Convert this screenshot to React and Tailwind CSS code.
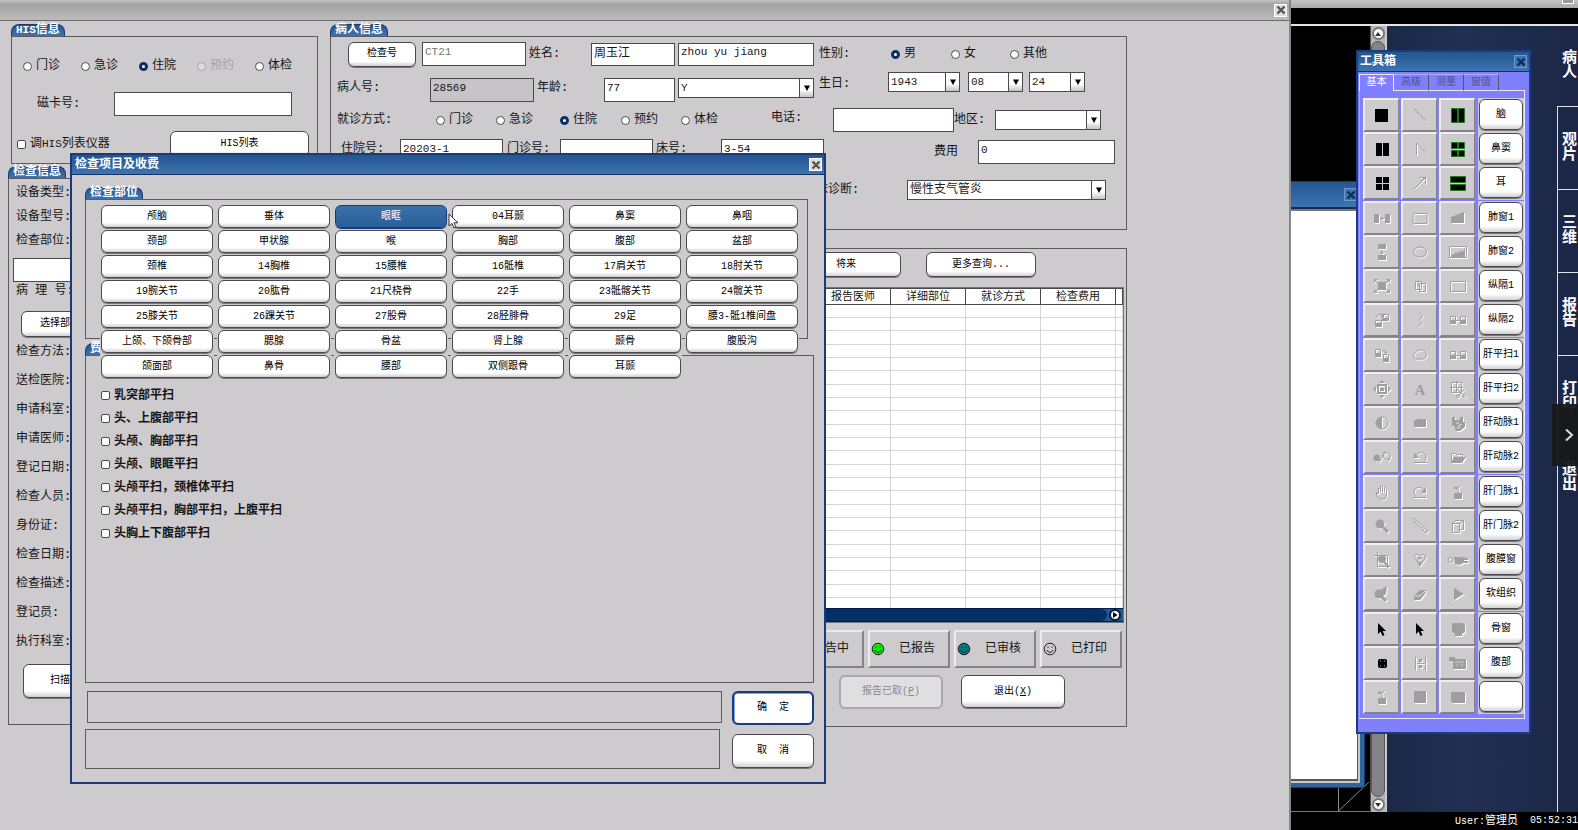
import React from 'react';

/* ---------- shared controls ---------- */

const BTN = 'rounded-md text-[10px] leading-none whitespace-nowrap';

const VARIANTS = {
  plain: 'border border-[#4a4a4c] bg-gradient-to-b from-white from-80% to-[#d0d0d2] text-black shadow-[0_1px_0_#77777a]',
  selected: 'border border-[#1b3a78] bg-gradient-to-b from-[#3a70aa] to-[#2c5f9a] text-white shadow-[0_1px_0_#1b3a78]',
  primary: 'border-2 border-[#1b3a78] bg-white text-black shadow-[inset_0_1px_0_#7fa8dc,inset_1px_0_0_#7fa8dc]',
  disabled: 'border-2 border-[#aaa8ab] bg-[#dfdfe1] text-[#8b898c]',
};

function Btn({ variant = 'plain', className = '', children, ...rest }) {
  return (
    <button type="button" className={`${BTN} ${VARIANTS[variant]} ${className}`} {...rest}>
      {children}
    </button>
  );
}

function Close({ className = 'border-white bg-[#dedede] text-[#555]', label }) {
  return (
    <button type="button" aria-label={label} className={`flex size-[13px] items-center justify-center border ${className}`}>
      <svg viewBox="0 0 10 10" className="size-2.5" stroke="currentColor" strokeWidth="2.4">
        <path d="M1.5 1.5l7 7M8.5 1.5l-7 7" />
      </svg>
    </button>
  );
}

function Radio({ name, label, checked, disabled, className = '' }) {
  return (
    <label className={`flex shrink-0 items-center gap-1 whitespace-nowrap ${disabled ? 'text-[#a5a3a6]' : ''} ${className}`}>
      <input
        type="radio"
        name={name}
        defaultChecked={checked}
        disabled={disabled}
        className="size-[9px] appearance-none rounded-full border border-[#4a4a4c] bg-white checked:border-[3px] checked:border-[#0d2f66] disabled:border-[#a5a3a6] disabled:bg-[#dcdadd]"
      />
      {label}
    </label>
  );
}

function Field({ id, value = '', className = '', ...rest }) {
  return (
    <input
      id={id}
      type="text"
      defaultValue={value}
      className={`shrink-0 border border-[#4a4a4c] px-0.5 pb-1 ${className}`}
      {...rest}
    />
  );
}

function Select({ id, value = '', className = '', label, text = 'text-[11px]' }) {
  return (
    <div className={`relative h-5 shrink-0 ${className}`}>
      <select
        id={id}
        aria-label={label}
        defaultValue={value}
        className={`size-full appearance-none border border-[#4a4a4c] bg-white pr-4 pl-0.5 text-[#222] ${text}`}
      >
        <option>{value}</option>
      </select>
      <span className="pointer-events-none absolute inset-y-px right-px flex w-3.5 items-center justify-center border-l border-[#4a4a4c] bg-gradient-to-b from-white from-60% to-[#c4c4c6]">
        <svg viewBox="0 0 6 6" className="size-1.5">
          <path d="M0 0.5h6L3 6z" />
        </svg>
      </span>
    </div>
  );
}

function Group({ title, className = '', boxClass = '', children }) {
  return (
    <section className={`flex flex-col ${className}`}>
      <h2 className="h-3 w-fit rounded-t-lg border border-b-0 border-[#1c3a72] bg-gradient-to-b from-[#24568f] to-[#3e74b0] px-1 text-xs leading-[11px] font-bold text-white">
        {title}
      </h2>
      <div className={`border border-[#5c5a5d] ${boxClass}`}>{children}</div>
    </section>
  );
}

/* ---------- main registration window ---------- */

function HisGroup() {
  return (
    <Group title={<span><span className="text-[11px]">HIS</span>信息</span>} className="ml-[3px]" boxClass="h-32 pl-[5px] pr-2">
      <div className="mt-[19px] flex h-5 items-center gap-[21px] pl-1.5">
        <Radio name="his" label="门诊" />
        <Radio name="his" label="急诊" />
        <Radio name="his" label="住院" checked />
        <Radio name="his" label="预约" disabled />
        <Radio name="his" label="体检" />
      </div>
      <div className="mt-4 flex items-center">
        <label htmlFor="card" className="w-[97px] pl-5">磁卡号:</label>
        <Field id="card" className="h-6 w-[178px] bg-white text-[11px]" />
      </div>
      <div className="mt-[15px] flex items-center justify-between">
        <label className="flex items-center gap-1">
          <input type="checkbox" className="size-[9px] appearance-none rounded-xs border border-[#4a4a4c] bg-white" />
          <span>调<span className="text-[11px]">HIS</span>列表仪器</span>
        </label>
        <Btn className="h-[26px] w-[139px]">HIS列表</Btn>
      </div>
    </Group>
  );
}

const STUDY_TOP = ['设备类型:', '设备型号:', '检查部位:'];
const STUDY_REST = ['检查方法:', '送检医院:', '申请科室:', '申请医师:', '登记日期:', '检查人员:', '身份证:', '检查日期:', '检查描述:', '登记员:', '执行科室:'];

function StudyGroup() {
  return (
    <Group title="检查信息" className="mt-0.5" boxClass="h-[547px] px-1">
      <div className="mt-0.5 pl-[3px]">
        {STUDY_TOP.map((t) => (
          <div key={t} className="flex h-6 items-center">{t}</div>
        ))}
      </div>
      <Field aria-label="检查部位" className="mt-[5px] block h-6 w-[280px] bg-white text-[11px]" />
      <div className="flex h-[18px] items-center pl-[3px]">病 理 号:</div>
      <Btn className="mt-[11px] ml-2 block h-[26px] w-[78px]">选择部位</Btn>
      <div className="pl-[3px]">
        {STUDY_REST.map((t) => (
          <div key={t} className="flex h-[29px] items-center">{t}</div>
        ))}
      </div>
      <Btn className="mt-2 ml-2.5 block h-[34px] w-[104px]">扫描申请单</Btn>
    </Group>
  );
}

function PatientGroup() {
  return (
    <Group title="病人信息" boxClass="h-[194px] pl-1.5">
      <div className="mt-[3px] flex h-7 items-center">
        <Btn className="mr-1.5 ml-[11px] h-[25px] w-[68px]">检查号</Btn>
        <Field aria-label="检查号" value="CT21" className="h-6 w-[104px] bg-white text-[11px] text-[#777]" />
        <label htmlFor="name" className="w-[65px] pl-[3px]">姓名:</label>
        <Field id="name" value="周玉江" className="mr-[3px] h-[23px] w-[84px] bg-white text-xs" />
        <Field aria-label="拼音" value="zhou yu jiang" className="h-[23px] w-[136px] bg-white text-[11px]" />
        <span className="w-[77px] pl-[5px]">性别:</span>
        <Radio name="sex" label="男" checked className="w-[60px]" />
        <Radio name="sex" label="女" className="w-[59px]" />
        <Radio name="sex" label="其他" />
      </div>
      <div className="mt-1 flex h-[30px] items-end">
        <label htmlFor="pid" className="w-[93px] pb-1.5">病人号:</label>
        <Field id="pid" value="28569" disabled className="h-6 w-[104px] bg-[#c6c4c7] text-[11px]" />
        <label htmlFor="age" className="w-[70px] pb-1.5 pl-[3px]">年龄:</label>
        <Field id="age" value="77" className="mr-[3px] h-6 w-[71px] bg-white text-[11px]" />
        <Select label="年龄单位" value="Y" className="mb-1 w-[136px]" />
        <div className="flex self-start">
          <span className="w-[74px] pt-1 pl-[5px]">生日:</span>
          <Select label="年" value="1943" className="mr-2 w-[72px]" />
          <Select label="月" value="08" className="mr-1.5 w-[55px]" />
          <Select label="日" value="24" className="w-[56px]" />
        </div>
      </div>
      <div className="mt-1 flex h-7 items-center">
        <span className="w-[99px]">就诊方式:</span>
        <Radio name="visit" label="门诊" className="w-[60px]" />
        <Radio name="visit" label="急诊" className="w-[64px]" />
        <Radio name="visit" label="住院" checked className="w-[61px]" />
        <Radio name="visit" label="预约" className="w-[60px]" />
        <Radio name="visit" label="体检" className="w-[90px]" />
        <label htmlFor="tel" className="w-[62px] pb-1">电话:</label>
        <Field id="tel" className="h-6 w-[121px] bg-white text-[11px]" />
        <label htmlFor="area" className="w-[41px]">地区:</label>
        <Select id="area" className="w-[106px]" />
      </div>
      <div className="mt-[5px] flex h-[25px] items-end">
        <div className="flex items-center self-start">
          <label htmlFor="inp" className="w-[63px] pb-1 pl-1">住院号:</label>
          <Field id="inp" value="20203-1" className="h-6 w-[103px] bg-white text-[11px]" />
          <label htmlFor="outp" className="w-[57px] pb-1 pl-1">门诊号:</label>
          <Field id="outp" className="h-6 w-[93px] bg-white text-[11px]" />
          <label htmlFor="bed" className="w-[68px] pb-1 pl-[3px]">床号:</label>
          <Field id="bed" value="3-54" className="h-6 w-[103px] bg-white text-[11px]" />
        </div>
        <label htmlFor="fee" className="w-[154px] pb-1 pl-[110px]">费用</label>
        <Field id="fee" value="0" className="h-6 w-[137px] bg-white text-[11px]" />
      </div>
      <div className="mt-4 flex items-center">
        <label htmlFor="diag" className="w-[570px] pl-[467px]">临床诊断:</label>
        <Select id="diag" value="慢性支气管炎" text="text-xs" className="w-[199px]" />
      </div>
    </Group>
  );
}

const COLUMNS = [
  ['检查号', 'w-[106px]'],
  ['姓名', 'w-[75px]'],
  ['年龄', 'w-[75px]'],
  ['检查日期', 'w-[75px]'],
  ['登记员', 'w-[75px]'],
  ['报告状态', 'w-[75px]'],
  ['报告医师', 'w-[75px]'],
  ['详细部位', 'w-[75px]'],
  ['就诊方式', 'w-[75px]'],
  ['检查费用', 'w-[75px]'],
  ['', ''],
];

function Smiley({ className }) {
  return (
    <svg viewBox="0 0 14 14" className={`size-3.5 ${className}`} stroke="#222" strokeWidth="1">
      <circle cx="7" cy="7" r="5.8" />
      <path d="M5 4.4v1.4M9 4.4v1.4" fill="none" />
      <path d="M3.8 8c1 3 5.4 3 6.4 0" fill="none" />
    </svg>
  );
}

const STATUS = [
  ['报告中', 'fill-[#e8e800]'],
  ['已报告', 'fill-[#00f000]'],
  ['已审核', 'fill-[#007c80]'],
  ['已打印', 'fill-[#cdcbce]'],
];

function ListGroup() {
  return (
    <section className="mt-[18px] flex h-[479px] flex-col border border-[#5c5a5d] px-0.5">
      <div className="mt-[3px] flex justify-end gap-[25px] pr-[88px]">
        <Btn className="h-[25px] w-[110px]">将来</Btn>
        <Btn className="h-[25px] w-[110px]">更多查询...</Btn>
      </div>
      <div className="mt-2.5 h-[336px] border border-[#77777a] bg-white">
        <div className="h-80 overflow-hidden bg-white">
          <table className="w-full table-fixed border-collapse">
            <thead>
              <tr className="h-4">
                {COLUMNS.map(([c, w], i) => (
                  <th key={i} className={`border border-[#4a4a4c] bg-white p-0 text-[11px] leading-[14px] font-normal ${w}`}>{c}</th>
                ))}
              </tr>
            </thead>
            <tbody>
              {Array.from({ length: 24 }, (_, r) => (
                <tr key={r} className={r % 3 === 2 ? 'h-[14px]' : 'h-[13px]'}>
                  {COLUMNS.map((_, i) => (
                    <td key={i} className="border border-[#d6d6d8] p-0" />
                  ))}
                </tr>
              ))}
            </tbody>
          </table>
        </div>
        <div className="flex h-3.5 items-center justify-end border-y border-[#001c48] bg-[#24568f]">
          <span className="h-3 flex-1 rounded-r-full bg-[#003068]" />
          <button type="button" aria-label="向右滚动" className="mx-0.5 flex size-3 items-center justify-center rounded-full border-2 border-[#001c48] bg-white">
            <svg viewBox="0 0 6 6" className="size-1.5"><path d="M1 0v6l4.5-3z" /></svg>
          </button>
        </div>
      </div>
      <div className="mt-[7px] flex justify-end gap-1 pr-0.5">
        {STATUS.map(([t, c]) => (
          <div key={t} className="flex h-[38px] w-[82px] items-center border-2 border-t-[#eceaed] border-r-[#858387] border-b-[#858387] border-l-[#eceaed]">
            <Smiley className={`ml-px ${c}`} />
            <span className="ml-3.5">{t}</span>
          </div>
        ))}
      </div>
      <div className="mt-[7px] flex justify-end gap-[18px] pr-[59px]">
        <Btn variant="disabled" disabled className="h-[34px] w-[104px]">
          报告已取(<u>P</u>)
        </Btn>
        <Btn className="h-[33px] w-[104px]">退出(<u>X</u>)</Btn>
      </div>
    </section>
  );
}

function MainWindow() {
  return (
    <div className="absolute inset-y-0 left-0 flex w-[1291px] flex-col overflow-hidden border-r-2 border-[#858585] bg-[#cdcbce]">
      <header className="flex h-[21px] shrink-0 items-center justify-end border-b border-[#6c6c6c] bg-gradient-to-b from-[#c4c4c4] via-[#a3a3a3] via-20% to-[#bcbcbc] pr-0.5">
        <Close label="关闭" />
      </header>
      <main className="flex flex-1 gap-3 pt-[3px] pl-2">
        <div className="w-[310px] shrink-0">
          <HisGroup />
          <StudyGroup />
        </div>
        <div className="w-[797px] shrink-0">
          <PatientGroup />
          <ListGroup />
        </div>
      </main>
    </div>
  );
}

/* ---------- exam item dialog ---------- */

const PARTS = [
  '颅脑', '垂体', '眼眶', '04耳颞', '鼻窦', '鼻咽',
  '颈部', '甲状腺', '喉', '胸部', '腹部', '盆部',
  '颈椎', '14胸椎', '15腰椎', '16骶椎', '17肩关节', '18肘关节',
  '19腕关节', '20肱骨', '21尺桡骨', '22手', '23骶髂关节', '24髋关节',
  '25膝关节', '26踝关节', '27股骨', '28胫腓骨', '29足', '腰3-骶1椎间盘',
  '上颌、下颌骨部', '腮腺', '骨盆', '肾上腺', '颞骨', '腹股沟',
  '颌面部', '鼻骨', '腰部', '双侧跟骨', '耳颞',
];

const FEES = ['乳突部平扫', '头、上腹部平扫', '头颅、胸部平扫', '头颅、眼眶平扫', '头颅平扫，颈椎体平扫', '头颅平扫，胸部平扫，上腹平扫', '头胸上下腹部平扫'];

function ExamDialog() {
  return (
    <div role="dialog" aria-label="检查项目及收费" className="absolute top-[153px] left-[70px] flex h-[631px] w-[756px] flex-col border-2 border-[#1b3a78] bg-[#cdcbce]">
      <header className="flex h-5 shrink-0 items-center justify-between border-b border-[#16315f] bg-gradient-to-b from-[#24568f] to-[#3e74b0] pr-0.5 pl-[3px]">
        <h1 className="text-xs leading-none font-bold text-white">检查项目及收费</h1>
        <Close label="关闭" />
      </header>
      <div className="flex flex-1 flex-col pt-3 pr-2.5 pl-[13px]">
        <Group title="检查部位" className="relative z-10 mr-1.5" boxClass="h-[140px] pt-1 pl-3.5">
          <div className="flex w-[702px] flex-wrap gap-x-[3px]">
            {PARTS.map((p) => (
              <div key={p} className="h-[25px] w-[114px] bg-[#cdcbce] p-px">
                <Btn
                  variant={p === '眼眶' ? 'selected' : 'plain'}
                  aria-pressed={p === '眼眶'}
                  className="h-[23px] w-full"
                >
                  {p}
                </Btn>
              </div>
            ))}
          </div>
        </Group>
        <Group title="费用信息" className="mt-1" boxClass="h-[328px] pt-7 pl-[15px]">
          {FEES.map((f) => (
            <label key={f} className="flex h-[23px] w-[184px] items-center gap-1 overflow-hidden font-bold whitespace-nowrap">
              <input type="checkbox" className="size-[9px] shrink-0 appearance-none rounded-xs border border-[#4a4a4c] bg-white" />
              <span className="overflow-hidden">{f}</span>
            </label>
          ))}
        </Group>
        <div className="mt-2 flex items-start justify-between">
          <output className="ml-0.5 block h-8 w-[635px] border border-[#5c5a5d]" />
          <Btn variant="primary" className="h-[34px] w-[82px] whitespace-pre">确  定</Btn>
        </div>
        <div className="mt-1 flex items-end justify-between">
          <output className="block h-10 w-[635px] border border-[#5c5a5d]" />
          <Btn className="mb-px h-[34px] w-[82px] whitespace-pre">取  消</Btn>
        </div>
      </div>
      <svg viewBox="0 0 12 17" className="absolute top-[58px] left-[376px] z-20 h-[17px] w-3" fill="#fff" stroke="#333">
        <path d="M1 1v12l3-2.6L6 15l2-1-2-4.200h4z" />
      </svg>
    </div>
  );
}

/* ---------- toolbox ---------- */

const line = { fill: 'none', stroke: 'currentColor', strokeWidth: 1 };
const solid = { fill: 'currentColor', stroke: 'none' };
const green = { fill: '#000', stroke: '#1c7a1c', strokeWidth: 1 };
const ink = { fill: '#000', stroke: 'none' };

const arrowCursor = <path {...ink} d="M8 4v11l2.600-2.400L12.500 17l2-.9-1.900-4H16z" />;
const lockArrow = (
  <>
    <path {...solid} d="M8 11h8v6H8zM7 6l4-2v4z" />
    <path {...line} d="M10 6h2v5M15 3l-3 3" />
  </>
);
const boxes = (
  <>
    <path {...line} d="M4.500 6.500h5v7h-5zM14.500 6.500h5v7h-5z" />
    <path {...solid} d="M4 10h6v4H4zM14 10h6v4h-6z" />
  </>
);

const ICONS = [
  { raw: true, d: <path {...ink} d="M5 4h13v13H5z" /> },
  { d: <path {...line} d="M6 4l12 12" /> },
  { raw: true, d: <path {...green} d="M5.500 3.500h6v14h-6zM12.500 3.500h6v14h-6z" /> },

  { raw: true, d: <path {...ink} d="M6 4h6v13H6zM13 4h6v13h-6z" /> },
  { d: <path {...line} d="M8.500 16V4L18 14" /> },
  { raw: true, d: <path {...green} d="M5.500 3.500h6v6h-6zM12.500 3.500h6v6h-6zM5.500 11.500h6v6h-6zM12.500 11.500h6v6h-6z" /> },

  { raw: true, d: <path {...ink} d="M6 4h6v6H6zM13 4h6v6h-6zM6 11h6v6H6zM13 11h6v6h-6z" /> },
  { d: <path {...line} d="M6 16L17 5M11 4.500h6.500V11M16 5l-3 3" /> },
  { raw: true, d: <path {...green} d="M4.500 3.500h15v6h-15zM4.500 11.500h15v6h-15z" /> },

  { d: <><path {...solid} d="M4 6h5v9H4zM15 6h5v9h-5z" /><path {...line} d="M10 10.500h4M12 8.500v4" /></> },
  { d: <rect {...line} x="5" y="5.500" width="14" height="10" rx="1" /> },
  { d: <path {...solid} d="M5 9l13-5v11H5z" /> },

  { d: <><path {...solid} d="M8 2h8v5H8zM8 13h8v5H8zM10 10h4l-2 2.500z" /><path {...line} d="M12 8v3" /></> },
  { d: <ellipse {...line} cx="12" cy="10" rx="6.500" ry="5" /> },
  { d: <><path {...line} d="M3.500 4.500h17v11h-17z" /><path {...solid} d="M5 15v-2l2-1 1 1 1-3 1 2 2-3 1 2 2-3 1 2 3-3v8z" /></> },

  { d: <><path {...solid} d="M8 6h8v8H8zM4 3h4L4 7zM20 3v4l-4-4zM4 17v-4l4 4zM20 17h-4l4-4z" /><path {...line} d="M5 4l3 3M19 4l-3 3M5 16l3-3M19 16l-3-3" /></> },
  { d: <path {...line} d="M7.500 5.500h6v8h-6zM11.500 7.500h6v8h-6zM10 6v5" /> },
  { d: <path {...line} d="M4.500 5.500h15v10h-15z" /> },

  { d: <><path {...line} d="M12.500 4.500h6v6h-6zM5.500 10.500h6v6h-6zM6 8c1-3 3-4 6-4" /><path {...solid} d="M5 13h6v4H5zM12 8h6v3h-6zM10 6l4-3v5z" /></> },
  { d: <path {...line} d="M11 3c4 1 4 3 2 5s-2 3 0 4 0 3-3 4" /> },
  { d: <>{boxes}<path {...line} d="M10 10.500h4" /></> },

  { d: <><path {...line} d="M5.500 4.500h5v7h-5zM13.500 9.500h5v7h-5zM12 6h4v2" /><path {...solid} d="M5 8h6v4H5zM13 13h6v4h-6zM14 7h4l-2 2z" /></> },
  { d: <path {...line} d="M7 14c-3-2-1-8 4-9s8 3 7 6-2 3-4 3z" /> },
  { d: <>{boxes}<path {...line} d="M10 10.500h4M12 7.500v1M12 12.500v1" /></> },

  { d: <><path {...solid} d="M12 1l3 3H9zM12 19l3-3H9zM3 10l3-3v6zM21 10l-3-3v6z" /><path {...line} strokeWidth="2" d="M8 6h8v8H8z" /><path {...solid} d="M10 9h4v3h-4z" /></> },
  { letter: true, d: <text x="12" y="16" textAnchor="middle" fontSize="15" fontWeight="bold" fontFamily="Liberation Serif, serif" fill="currentColor">A</text> },
  { d: <><path {...line} d="M5.500 3.500h10v10h-10zM10.500 2v12M4 8.500h13M11 10l7 6M18 10l-5 7" /><circle {...line} cx="12" cy="17" r="1.500" /><circle {...line} cx="18.500" cy="17" r="1.500" /></> },

  { d: <><circle {...line} cx="12" cy="10" r="6" /><path {...solid} d="M12 4a6 6 0 0 0 0 12z" /></> },
  { d: <path {...solid} d="M6 8l3-2h9v8H6z" /> },
  { d: <><path {...solid} d="M6 4h3v3h5V4h3v5h2v5l-5 4h-4l-2-5H6z" /><path d="M10 10h3M12 13l4-2M11 15l3-1" stroke="#e6e4e7" strokeWidth="1" /></> },

  { d: <><circle {...solid} cx="7" cy="11" r="3.500" /><circle {...line} cx="17" cy="9" r="3.500" /><path {...line} d="M9 16L15 4M17 15l3-3" /></> },
  { d: <><path {...line} d="M8 9c1-5 10-5 10 1 0 2-1 3-2 4.500M6 15.500h13" /><path {...solid} d="M6 5v6h5z" /></> },
  { d: <><path {...line} d="M5.500 15V6.500h4l1 1h6V10" /><path {...solid} d="M5 16l3-6h12l-4 6z" /></> },

  { d: <path {...line} d="M8.500 12V6M10.500 10V4M12.500 10V3.500M14.500 10V5M8 12l-2-2 1 4 3 3h5l1.500-4V7" /> },
  { d: <><path {...line} d="M16 9C15 4 6 4 6 10c0 2 1 3 2 4.500M5 15.500h13" /><path {...solid} d="M18 5v6h-5z" /></> },
  { d: lockArrow },

  { d: <><circle {...solid} cx="10" cy="8" r="4.500" /><path {...line} strokeWidth="3" d="M13 11l5 5" /></> },
  { d: <path {...line} d="M4 4l14 13 2-2L6 2zM8 5l-1 1M10 7l-1 1M12 9l-1 1M14 11l-1 1M16 13l-1 1" /> },
  { d: <path {...line} d="M6.500 7.500h7v9h-7zM9.500 4.500h8v9h-4M6.500 7.500l3-3M13.500 7.500l4-3" /> },

  { d: <><path {...line} d="M7.500 2v14.500H20M4 5.500h13.500V18" /><circle {...solid} cx="12" cy="9" r="4" /><path {...line} strokeWidth="2" d="M14 12l5 5" /></> },
  { d: <><path {...line} d="M6 6l3-2 3 2 3-2 3 3-6 9zM9 10l3-3 3 3-3 3z" /><path {...solid} d="M10 7h4l-2 3zM11 12h2v3h-2z" /></> },
  { d: <><circle {...line} cx="4.500" cy="10" r="2.500" /><path {...solid} d="M8 7h6l8 1v2h-4v1h4v2h-5l-3 2-5-1z" /></> },

  { d: <><circle {...solid} cx="9" cy="10" r="4.500" /><path {...solid} d="M9 7l8-5-1 8-4 3z" /><path {...line} strokeWidth="3" d="M12 13l4 4" /></> },
  { d: <><path {...solid} d="M6 12l6-6h6l-1 4-5 6H6z" /><path d="M7 12h5l5-5" fill="none" stroke="#e6e4e7" strokeWidth="1" /></> },
  { d: <path {...solid} d="M8 4l10 6-10 6z" /> },

  { raw: true, d: arrowCursor },
  { raw: true, d: arrowCursor },
  { d: <path {...solid} d="M7 4h10l2 2v7l-3 2v2H9v-2l-3-2V5z" /> },

  { raw: true, d: <><rect {...ink} x="8" y="6" width="9" height="9" rx="2" /><path d="M10 8h.8M14.200 8h.8M10 13h.8M14.200 13h.8" stroke="#fff" strokeWidth="1" /></> },
  { d: <><path {...line} d="M7.500 4v13M17.500 4v13M9 10.500h7" /><path {...solid} d="M11 6h3v3h-3zM11 12h3v3h-3z" /></> },
  { d: <><path {...solid} d="M3 4h5l2 2h10v10H7V9L3 8z" /><path d="M9 9h9M10 12h2M15 12h2" stroke="#cdcbce" strokeWidth="1" /></> },

  { d: lockArrow },
  { d: <path {...solid} d="M6 4h12v12H6z" /> },
  { d: <path {...solid} d="M5 5h13l1 1v10H7l-2-2z" /> },
];

function ToolIcon({ icon }) {
  return (
    <svg viewBox="0 0 24 20" className="h-5 w-6">
      {icon.raw ? (
        icon.d
      ) : (
        <>
          <g transform="translate(1 1)" className="text-white">{icon.letter ? null : icon.d}</g>
          <g className="text-[#a09ea1]">{icon.d}</g>
        </>
      )}
    </svg>
  );
}

const PRESETS = ['脑', '鼻窦', '耳', '肺窗1', '肺窗2', '纵隔1', '纵隔2', '肝平扫1', '肝平扫2', '肝动脉1', '肝动脉2', '肝门脉1', '肝门脉2', '腹膜窗', '软组织', '骨窗', '腹部', ''];
const BANDS = [[0, 3], [3, 7], [7, 11], [11, 15], [15, 18]];

function Toolbox() {
  return (
    <div className="absolute top-[50px] left-[1356px] flex h-[684px] w-[175px] flex-col border-2 border-[#1d3c7c] bg-[#8080ff]">
      <header className="flex h-5 shrink-0 items-center justify-between border-b border-[#16315f] bg-gradient-to-b from-[#24568f] to-[#3e74b0] pr-0.5 pl-0.5">
        <h2 className="text-xs leading-none font-bold text-white">工具箱</h2>
        <Close label="关闭工具箱" className="border-[#6c9ad0] bg-[#3e74b0] text-[#122c58]" />
      </header>
      <div className="flex h-[19px] items-stretch pt-0.5 pl-px text-[10px] leading-none">
        <button type="button" className="w-[35px] border-t border-r border-l border-[#e8e8ff] text-white">基本</button>
        {['高级', '测量', '窗值'].map((t) => (
          <button type="button" key={t} className="w-[35px] border-t border-r border-b border-t-[#b0b0f0] border-r-[#55556a] border-b-[#e8e8ff] text-[#50508c]">{t}</button>
        ))}
        <span className="mr-1 flex-1 border-b border-[#e8e8ff]" />
      </div>
      <div className="mr-1 ml-px flex flex-col gap-px border-r border-b border-l border-[#e8e8ff] border-l-[#a8a8ff] pt-[7px] pb-1 pl-[3px]">
        {BANDS.map(([a, b]) => (
          <div key={a} className="flex justify-between">
            <div className="grid grid-cols-3 gap-x-0.5">
              {ICONS.slice(a * 3, b * 3).map((ic, i) => (
                <button
                  type="button"
                  key={i}
                  aria-label={`工具 ${a * 3 + i + 1}`}
                  className="flex h-[34px] w-9 items-center justify-center border-t-2 border-r border-b-2 border-l-2 border-t-[#f0eef1] border-r-[#858387] border-b-[#858387] border-l-[#f0eef1] bg-[#cdcbce]"
                >
                  <ToolIcon icon={ic} />
                </button>
              ))}
            </div>
            <div className="w-[46px] bg-[#cdcbce]">
              {PRESETS.slice(a, b).map((p) => (
                <div key={p} className="h-[34px] px-px pt-px pb-0.5">
                  <Btn aria-label={p || '空'} className="size-full px-0">{p}</Btn>
                </div>
              ))}
            </div>
          </div>
        ))}
      </div>
    </div>
  );
}

/* ---------- background viewer ---------- */

const NAV = ['病人', '观片', '三维', '报告', '打印', '退出'];

function ScrollKnob({ up }) {
  return (
    <button type="button" aria-label={up ? '向上' : '向下'} className="mx-auto flex size-[13px] shrink-0 items-center justify-center rounded-full border-2 border-[#777] bg-white">
      <svg viewBox="0 0 6 6" className="size-1.5"><path d={up ? 'M0 5h6L3 1z' : 'M0 1h6L3 5z'} fill="#333" /></svg>
    </button>
  );
}

function Viewer() {
  return (
    <div className="flex h-full flex-col bg-black">
      <header className="flex h-2 shrink-0 items-start justify-end overflow-hidden bg-gradient-to-b from-[#c4c4c4] to-[#a8a8a8] pr-1">
        <span className="h-1 w-3 border border-t-0 border-white bg-[#999]" />
      </header>
      <div className="mt-4 flex min-h-0 flex-1 border-t-2 border-[#e4e4e4]">
        <div className="flex flex-1 items-end justify-end border-b border-[#777]">
          <svg viewBox="0 0 80 32" className="h-8 w-20" fill="none" stroke="#8a8a8a">
            <path d="M48.500 8v24M48.500 32L79 3" />
          </svg>
        </div>
        <div className="flex w-[15px] flex-col border-l border-[#555] bg-[#b4b2b5] py-px">
          <ScrollKnob up />
          <span className="my-px flex-1 rounded-full border border-[#555] bg-[#858387]" />
          <ScrollKnob />
        </div>
        <div className="flex w-[193px] justify-end border-l-2 border-[#c8c8c8] bg-gradient-to-r from-[#1b2848] via-[#222f52] via-40% to-[#1c2747]">
          <nav className="flex w-[21px] flex-col">
            {NAV.map((n, i) => (
              <a
                key={n}
                href="#"
                className={`flex justify-end border-[#e0e0e0] pr-px text-[15px] leading-[15px] font-bold text-white ${i === 0 ? 'h-20 items-center' : 'border-t border-l'} ${i > 0 && i < 5 ? 'h-[83px] items-center' : ''} ${i === 5 ? 'flex-1 items-start pt-6' : ''}`}
              >
                <span className="w-[15px] break-all">{n}</span>
              </a>
            ))}
          </nav>
        </div>
      </div>
      <footer className="flex h-[18px] shrink-0 items-center justify-end gap-3 text-[10px] leading-none text-white">
        <span>User:<span className="text-[11px]">管理员</span></span>
        <span>05:52:31</span>
      </footer>
    </div>
  );
}

function ReportWindow() {
  return (
    <div className="absolute top-[181px] left-[1100px] flex h-[607px] w-[265px] flex-col border border-[#1b3a78] bg-[#2f659f] pr-1 pb-1">
      <header className="-mr-1 flex h-[27px] shrink-0 items-center justify-end border-b-2 border-[#122c58] bg-gradient-to-b from-[#24568f] to-[#3e74b0] pr-[7px]">
        <Close label="关闭窗口" className="border-[#6c9ad0] bg-[#3e74b0] text-[#122c58]" />
      </header>
      <div className="flex flex-1 border-2 border-t-[#77777a] border-r-[#c8c8c8] border-b-[#c8c8c8] border-l-[#77777a]">
        <div className="flex-1 border-r border-b-2 border-[#55556a] bg-white" />
      </div>
    </div>
  );
}

export default function App() {
  return (
    <div
      lang="zh-CN"
      className="relative h-screen w-full overflow-hidden bg-black font-['Liberation_Mono','Noto_Sans_CJK_SC',monospace] text-xs leading-4 text-[#151515]"
    >
      <Viewer />
      <ReportWindow />
      <MainWindow />
      <ExamDialog />
      <Toolbox />
      <button type="button" aria-label="展开" className="absolute top-[404px] right-0 flex h-[62px] w-[26px] items-center justify-end bg-[#18181a]/95 pr-1">
        <svg viewBox="0 0 10 14" className="h-3.5 w-2.5" fill="none" stroke="#ddd" strokeWidth="2">
          <path d="M2 1.500l6 5.500-6 5.500" />
        </svg>
      </button>
    </div>
  );
}
